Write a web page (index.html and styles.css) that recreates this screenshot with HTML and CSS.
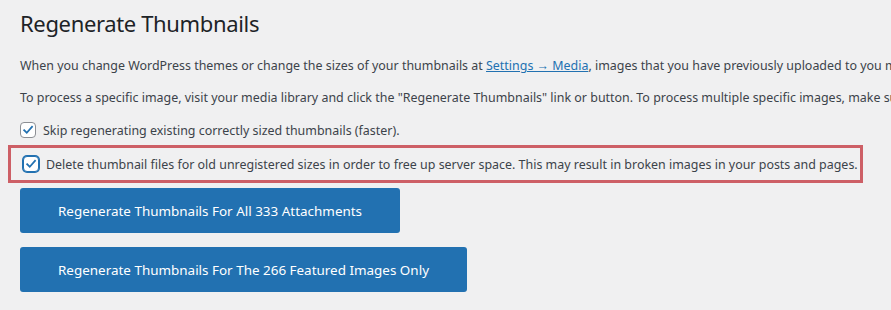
FILE: index.html
```html
<!DOCTYPE html>
<html>
<head>
<meta charset="utf-8">
<link rel="stylesheet" href="styles.css">
</head>
<body>
<div class="wrap">
  <h1 class="title">Regenerate Thumbnails</h1>
  <p class="text">When you change WordPress themes or change the sizes of your thumbnails at <a href="#">Settings → Media</a>, images that you have previously uploaded to you media library will be missing thumbnail files for those new image sizes. This tool will allow you to create those missing thumbnail files for all images.</p>
  <p class="text">To process a specific image, visit your media library and click the "Regenerate Thumbnails" link or button. To process multiple specific images, make sure you're in the list view and then select them and choose "Regenerate Thumbnails" from the bulk actions dropdown.</p>
  <label class="option first">
    <span class="box"><svg viewBox="0 0 16 16" width="16" height="16"><path d="M3.6 8.2 L6.6 11.2 L12.6 4.4" fill="none" stroke="#2271b1" stroke-width="2" stroke-linecap="square"/></svg></span>
    <span class="label">Skip regenerating existing correctly sized thumbnails (faster).</span>
  </label>
  <label class="option highlight">
    <span class="box focus"><svg viewBox="0 0 16 16" width="16" height="16"><path d="M3.6 8.2 L6.6 11.2 L12.6 4.4" fill="none" stroke="#2271b1" stroke-width="2" stroke-linecap="square"/></svg></span>
    <span class="label">Delete thumbnail files for old unregistered sizes in order to free up server space. This may result in broken images in your posts and pages.</span>
  </label>
  <div class="buttons">
    <button class="btn">Regenerate Thumbnails For All 333 Attachments</button>
    <button class="btn">Regenerate Thumbnails For The 266 Featured Images Only</button>
  </div>
</div>
</body>
</html>
```
FILE: styles.css
```css
html, body {
  margin: 0;
  padding: 0;
  background: #f0f0f1;
  overflow: hidden;
}
.wrap {
  padding: 9px 20px 0 20px;
  font-family: "Noto Sans", sans-serif;
  font-size: 12.45px;
  color: #3c434a;
  white-space: nowrap;
}
.title {
  margin: 0 0 18px 0;
  font-size: 22px;
  line-height: 29px;
  font-weight: 400;
  letter-spacing: -0.35px;
  color: #1d2327;
}
.text {
  margin: 0 0 13px 0;
  line-height: 19px;
}
.text a {
  color: #2271b1;
  text-decoration: underline;
}
.option {
  display: flex;
  align-items: center;
  gap: 7px;
  height: 20px;
}
.option.first {
  margin-top: 1px;
}
.box {
  width: 14px;
  height: 14px;
  border: 1px solid #8c8f94;
  border-radius: 4px;
  background: #fff;
  display: flex;
  align-items: center;
  justify-content: center;
  flex: none;
}
.box svg {
  width: 14px;
  height: 14px;
}
.box.focus {
  border-color: #2271b1;
  box-shadow: 0 0 0 1px #2271b1;
}
.highlight {
  margin-left: -12px;
  margin-top: 5px;
  padding: 0 0 0 12px;
  height: 32px;
  width: 837px;
  border: 3px solid #cd5f66;
  box-sizing: content-box;
}
.buttons {
  display: flex;
  flex-direction: column;
  align-items: flex-start;
  gap: 14px;
  margin-top: 5px;
}
.btn {
  height: 45px;
  padding: 0 38px;
  border: 0;
  border-radius: 3px;
  background: #2271b1;
  color: #fff;
  font-family: "Noto Sans", sans-serif;
  font-size: 13.45px;
}
```
